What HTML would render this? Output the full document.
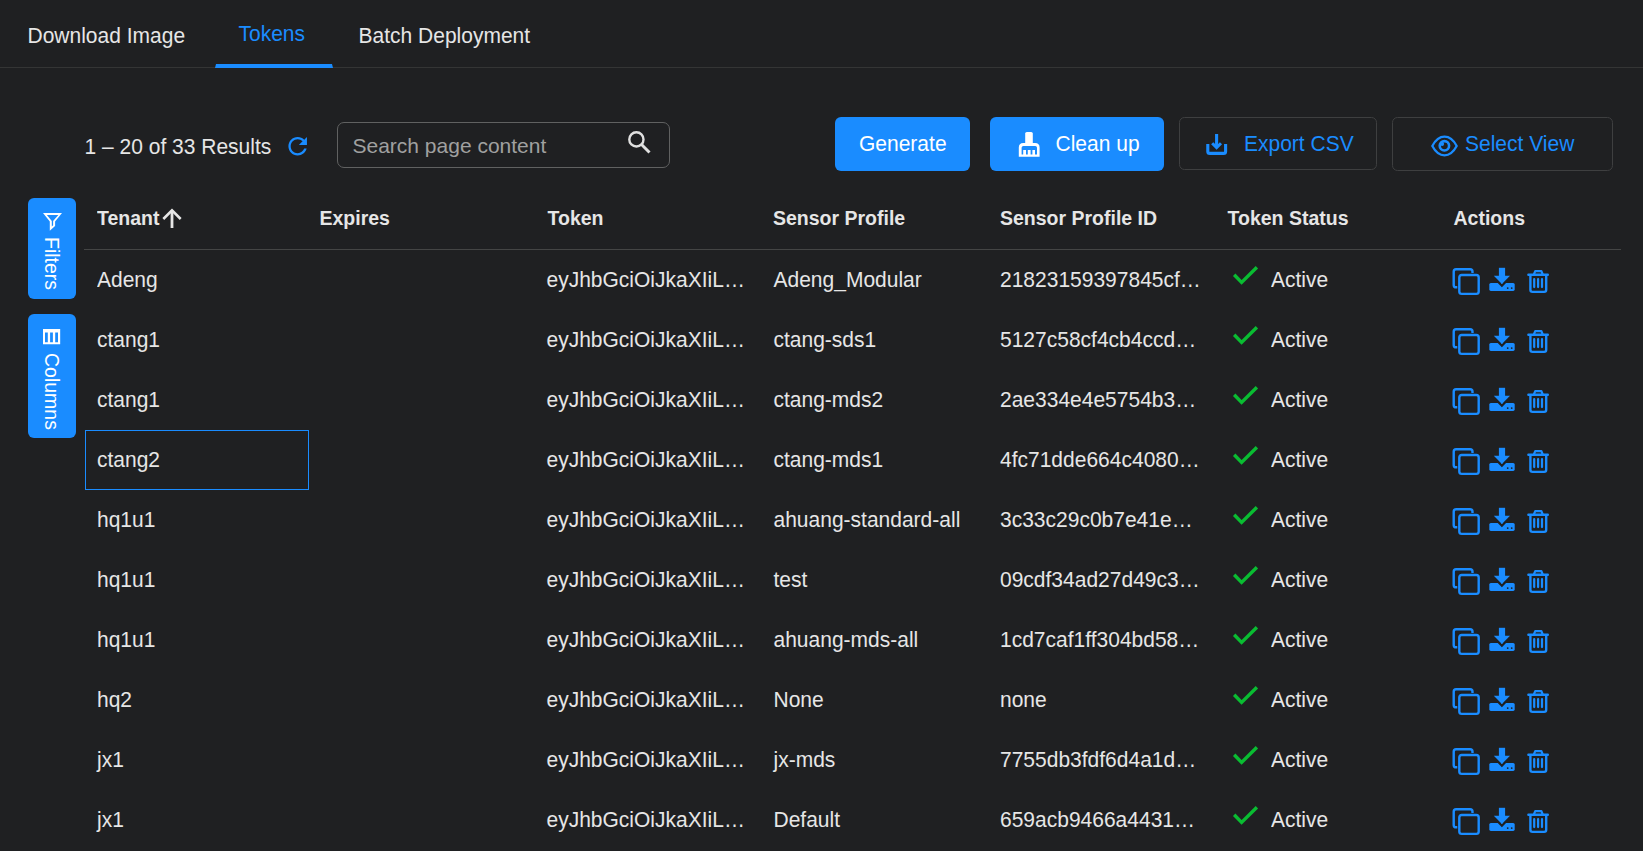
<!DOCTYPE html>
<html><head><meta charset="utf-8">
<style>
html,body{margin:0;padding:0;}
body{width:1643px;height:851px;overflow:hidden;background:#1f2022;position:relative;font-family:"Liberation Sans",sans-serif;font-size:21px;color:#e6e6e6;}
.a{position:absolute;white-space:nowrap;line-height:24px;transform:scaleY(1.05);transform-origin:0 19px;}
.tabline{position:absolute;left:0;top:67px;width:1643px;height:1px;background:#343535;}
.tabul{position:absolute;left:215px;top:64px;width:118px;height:4px;background:#1a8cff;clip-path:polygon(1px 0,117px 0,118px 100%,0 100%);}
.btn{position:absolute;box-sizing:border-box;border-radius:6px;}
.blue{background:#1a8cff;color:#fff;}
.outl{border:1px solid #3e3f40;color:#1a8cff;border-radius:5.5px;}
.hdr{font-weight:bold;font-size:19.5px;transform:scaleY(1.08);transform-origin:0 18.75px;}
.hline{position:absolute;left:84px;top:249px;width:1537px;height:1px;background:#444545;}
.side{position:absolute;left:28px;width:48px;background:#1a8cff;border-radius:6px;color:#fff;}
.vt{position:absolute;writing-mode:vertical-rl;font-size:19.5px;line-height:24px;white-space:nowrap;}
svg{position:absolute;overflow:visible;}
</style></head><body>
<!-- tabs -->
<div class="a" style="left:27.5px;top:24px;">Download Image</div>
<div class="a" style="left:238.5px;top:22px;color:#1a8cff;">Tokens</div>
<div class="a" style="left:358.5px;top:24px;">Batch Deployment</div>
<div class="tabline"></div>
<div class="tabul"></div>

<!-- toolbar -->
<div class="a" style="left:84.5px;top:135px;">1 – 20 of 33 Results</div>
<svg style="left:283px;top:132px" width="30" height="30" viewBox="0 0 30 30"><g transform="translate(0.75 0.35) scale(1.16)"><path fill="#1a8cff" d="M17.65 6.35C16.2 4.9 14.21 4 12 4c-4.42 0-7.99 3.58-7.99 8s3.57 8 7.99 8c3.73 0 6.84-2.55 7.730-6h-2.08c-.82 2.33-3.04 4-5.65 4-3.31 0-6-2.690-6-6s2.69-6 6-6c1.66 0 3.14.69 4.22 1.78L13 11h7V4l-2.350 2.350z"/></g></svg>

<div class="btn" style="left:337px;top:122px;width:333px;height:46px;border:1px solid #606161;border-radius:7px;"></div>
<div class="a" style="left:352.5px;top:134px;color:#a0a0a0;transform:none;">Search page content</div>
<svg style="left:626.5px;top:129.5px" width="24" height="24" viewBox="0 0 24 24"><circle cx="9.4" cy="9.4" r="7.1" fill="none" stroke="#e0e0e0" stroke-width="2.4"/><path d="M13.8 13.8 L22.5 22.5" stroke="#e0e0e0" stroke-width="3"/></svg>

<div class="btn blue" style="left:835px;top:117px;width:135px;height:54px;"></div>
<div class="a" style="left:859px;top:132px;color:#fff;">Generate</div>

<div class="btn blue" style="left:990px;top:117px;width:174px;height:54px;"></div>
<svg style="left:1012px;top:128px" width="34" height="34" viewBox="0 0 34 34"><rect x="13.2" y="4" width="7.6" height="12" rx="1.6" fill="#fff"/><path fill-rule="evenodd" fill="#fff" d="M6.8 28.8 V19.5 Q6.8 15 11.3 15 H23.1 Q27.6 15 27.6 19.5 V28.8 Z M9.6 26.4 V19.8 Q9.6 18 11.4 18 H23.2 Q25 18 25 19.8 V26.4 Z"/><rect x="11.2" y="22" width="2.8" height="5" fill="#fff"/><rect x="15.8" y="22" width="2.8" height="5" fill="#fff"/><rect x="20.4" y="22" width="2.6" height="5" fill="#fff"/></svg>
<div class="a" style="left:1055.5px;top:132px;color:#fff;">Clean up</div>

<div class="btn outl" style="left:1179px;top:117px;width:198px;height:53px;"></div>
<svg style="left:1200px;top:128px" width="34" height="34" viewBox="0 0 34 34"><path d="M16.6 6 V19.5" stroke="#1a8cff" stroke-width="3.1" fill="none"/><path d="M12.2 15.2 L16.6 19.6 L21 15.2" stroke="#1a8cff" stroke-width="3" fill="none"/><path d="M7.8 16 V23.4 Q7.8 25.4 9.8 25.4 H23.6 Q25.6 25.4 25.6 23.4 V16" stroke="#1a8cff" stroke-width="3.1" fill="none"/></svg>
<div class="a" style="left:1244px;top:132px;color:#1a8cff;">Export CSV</div>

<div class="btn outl" style="left:1392px;top:117px;width:221px;height:54px;"></div>
<svg style="left:1426px;top:128px" width="36" height="34" viewBox="0 0 36 34"><path d="M6.3 18 C9.5 12 13.5 8.7 18.5 8.7 C23.5 8.7 27.5 12 30.7 18 C27.5 24 23.5 27.3 18.5 27.3 C13.5 27.3 9.5 24 6.3 18 Z" fill="none" stroke="#1a8cff" stroke-width="2.3" stroke-linejoin="round"/><circle cx="18.4" cy="17.8" r="4.7" fill="none" stroke="#1a8cff" stroke-width="2.6"/><circle cx="16.1" cy="15.9" r="2" fill="#1a8cff"/></svg>
<div class="a" style="left:1465px;top:132px;color:#1a8cff;">Select View</div>

<!-- side buttons -->
<div class="side" style="top:198px;height:101px;"></div>
<svg style="left:43px;top:213px" width="20" height="19" viewBox="0 0 20 19"><path fill-rule="evenodd" fill="#fff" d="M0 0 H19 L12.1 8.5 V13 L6.8 17.7 V8.5 Z M3.9 2 H15.4 L10.1 8 V12.2 L8.8 13.4 V8 Z"/></svg>
<div class="vt" style="left:40px;top:237px;color:#fff;">Filters</div>
<div class="side" style="top:314px;height:124px;"></div>
<svg style="left:43px;top:329px" width="17.2" height="15.2" viewBox="0 0 17.2 15.2"><path fill-rule="evenodd" fill="#fff" d="M0 0 H17.2 V15.2 H0 Z M2 3.4 H4.8 V13.2 H2 Z M7.1 3.4 H9.9 V13.2 H7.1 Z M12.2 3.4 H15 V13.2 H12.2 Z"/></svg>
<div class="vt" style="left:40px;top:353px;color:#fff;">Columns</div>

<!-- header -->
<div class="a hdr" style="left:97px;top:206px;">Tenant</div>
<svg style="left:162px;top:208px" width="20" height="21" viewBox="0 0 20 21"><path d="M10 2.5 V20" fill="none" stroke="#e6e6e6" stroke-width="2.8"/><path d="M1.3 11 L10 2.3 L18.7 11" fill="none" stroke="#e6e6e6" stroke-width="2.6"/></svg>
<div class="a hdr" style="left:319.5px;top:206px;">Expires</div>
<div class="a hdr" style="left:547.5px;top:206px;">Token</div>
<div class="a hdr" style="left:773px;top:206px;">Sensor Profile</div>
<div class="a hdr" style="left:1000px;top:206px;">Sensor Profile ID</div>
<div class="a hdr" style="left:1227.5px;top:206px;">Token Status</div>
<div class="a hdr" style="left:1453.5px;top:206px;">Actions</div>
<div class="hline"></div>

<div class="btn" style="left:85px;top:430px;width:224px;height:60px;border:1px solid #1a8cff;border-radius:0;"></div>

<!--ROWS-->
<div class="a" style="left:97px;top:268px;">Adeng</div>
<div class="a" style="left:546.5px;top:268px;">eyJhbGciOiJkaXIiL…</div>
<div class="a" style="left:773.5px;top:268px;">Adeng_Modular</div>
<div class="a" style="left:1000px;top:268px;">21823159397845cf…</div>
<svg style="left:1228px;top:260px" width="36" height="30" viewBox="0 0 36 30"><path d="M6.2 14.8 L13.6 22.4 L28.9 7.2" fill="none" stroke="#0abc32" stroke-width="3.4"/></svg>
<div class="a" style="left:1271px;top:268px;">Active</div>
<svg style="left:1448px;top:264px" width="36" height="34" viewBox="0 0 36 34"><rect x="5.7" y="5.3" width="18.8" height="18" rx="2.4" fill="none" stroke="#1a8cff" stroke-width="2.4"/><rect x="11.3" y="11" width="19.4" height="18.9" rx="2.4" fill="#1f2022" stroke="#1f2022" stroke-width="4"/><rect x="11.3" y="11" width="19.4" height="18.9" rx="2.4" fill="none" stroke="#1a8cff" stroke-width="2.4"/></svg>
<svg style="left:1485px;top:264px" width="35" height="32" viewBox="0 0 35 32"><rect x="4.3" y="19" width="25.4" height="7.9" rx="1.6" fill="#1a8cff"/><path d="M7.6 12.2 L16.9 21.6 L26.2 12.2" fill="none" stroke="#1f2022" stroke-width="2.2"/><rect x="13.9" y="3.8" width="6.2" height="9" fill="#1a8cff"/><path d="M8.8 11.65 H25 L16.9 19.9 Z" fill="#1a8cff"/><circle cx="22.7" cy="24.1" r="0.9" fill="#1f2022"/><circle cx="26.7" cy="24.1" r="0.9" fill="#1f2022"/></svg>
<svg style="left:1522px;top:264px" width="32" height="34" viewBox="0 0 32 34"><path d="M6.4 10.8 H25.8" stroke="#1a8cff" stroke-width="2.4" stroke-linecap="round"/><path d="M11.9 10.5 L13.2 7.1 H19.4 L20.7 10.5" fill="none" stroke="#1a8cff" stroke-width="2.2" stroke-linejoin="round"/><path d="M8.4 11 V25.8 Q8.4 27.9 10.5 27.9 H22.1 Q24.2 27.9 24.2 25.8 V11" fill="none" stroke="#1a8cff" stroke-width="2.4"/><path d="M12.2 15.1 V23.1 M16.1 15.1 V23.1 M20 15.1 V23.1" stroke="#1a8cff" stroke-width="2.2" stroke-linecap="round"/></svg>
<div class="a" style="left:97px;top:328px;">ctang1</div>
<div class="a" style="left:546.5px;top:328px;">eyJhbGciOiJkaXIiL…</div>
<div class="a" style="left:773.5px;top:328px;">ctang-sds1</div>
<div class="a" style="left:1000px;top:328px;">5127c58cf4cb4ccd…</div>
<svg style="left:1228px;top:320px" width="36" height="30" viewBox="0 0 36 30"><path d="M6.2 14.8 L13.6 22.4 L28.9 7.2" fill="none" stroke="#0abc32" stroke-width="3.4"/></svg>
<div class="a" style="left:1271px;top:328px;">Active</div>
<svg style="left:1448px;top:324px" width="36" height="34" viewBox="0 0 36 34"><rect x="5.7" y="5.3" width="18.8" height="18" rx="2.4" fill="none" stroke="#1a8cff" stroke-width="2.4"/><rect x="11.3" y="11" width="19.4" height="18.9" rx="2.4" fill="#1f2022" stroke="#1f2022" stroke-width="4"/><rect x="11.3" y="11" width="19.4" height="18.9" rx="2.4" fill="none" stroke="#1a8cff" stroke-width="2.4"/></svg>
<svg style="left:1485px;top:324px" width="35" height="32" viewBox="0 0 35 32"><rect x="4.3" y="19" width="25.4" height="7.9" rx="1.6" fill="#1a8cff"/><path d="M7.6 12.2 L16.9 21.6 L26.2 12.2" fill="none" stroke="#1f2022" stroke-width="2.2"/><rect x="13.9" y="3.8" width="6.2" height="9" fill="#1a8cff"/><path d="M8.8 11.65 H25 L16.9 19.9 Z" fill="#1a8cff"/><circle cx="22.7" cy="24.1" r="0.9" fill="#1f2022"/><circle cx="26.7" cy="24.1" r="0.9" fill="#1f2022"/></svg>
<svg style="left:1522px;top:324px" width="32" height="34" viewBox="0 0 32 34"><path d="M6.4 10.8 H25.8" stroke="#1a8cff" stroke-width="2.4" stroke-linecap="round"/><path d="M11.9 10.5 L13.2 7.1 H19.4 L20.7 10.5" fill="none" stroke="#1a8cff" stroke-width="2.2" stroke-linejoin="round"/><path d="M8.4 11 V25.8 Q8.4 27.9 10.5 27.9 H22.1 Q24.2 27.9 24.2 25.8 V11" fill="none" stroke="#1a8cff" stroke-width="2.4"/><path d="M12.2 15.1 V23.1 M16.1 15.1 V23.1 M20 15.1 V23.1" stroke="#1a8cff" stroke-width="2.2" stroke-linecap="round"/></svg>
<div class="a" style="left:97px;top:388px;">ctang1</div>
<div class="a" style="left:546.5px;top:388px;">eyJhbGciOiJkaXIiL…</div>
<div class="a" style="left:773.5px;top:388px;">ctang-mds2</div>
<div class="a" style="left:1000px;top:388px;">2ae334e4e5754b3…</div>
<svg style="left:1228px;top:380px" width="36" height="30" viewBox="0 0 36 30"><path d="M6.2 14.8 L13.6 22.4 L28.9 7.2" fill="none" stroke="#0abc32" stroke-width="3.4"/></svg>
<div class="a" style="left:1271px;top:388px;">Active</div>
<svg style="left:1448px;top:384px" width="36" height="34" viewBox="0 0 36 34"><rect x="5.7" y="5.3" width="18.8" height="18" rx="2.4" fill="none" stroke="#1a8cff" stroke-width="2.4"/><rect x="11.3" y="11" width="19.4" height="18.9" rx="2.4" fill="#1f2022" stroke="#1f2022" stroke-width="4"/><rect x="11.3" y="11" width="19.4" height="18.9" rx="2.4" fill="none" stroke="#1a8cff" stroke-width="2.4"/></svg>
<svg style="left:1485px;top:384px" width="35" height="32" viewBox="0 0 35 32"><rect x="4.3" y="19" width="25.4" height="7.9" rx="1.6" fill="#1a8cff"/><path d="M7.6 12.2 L16.9 21.6 L26.2 12.2" fill="none" stroke="#1f2022" stroke-width="2.2"/><rect x="13.9" y="3.8" width="6.2" height="9" fill="#1a8cff"/><path d="M8.8 11.65 H25 L16.9 19.9 Z" fill="#1a8cff"/><circle cx="22.7" cy="24.1" r="0.9" fill="#1f2022"/><circle cx="26.7" cy="24.1" r="0.9" fill="#1f2022"/></svg>
<svg style="left:1522px;top:384px" width="32" height="34" viewBox="0 0 32 34"><path d="M6.4 10.8 H25.8" stroke="#1a8cff" stroke-width="2.4" stroke-linecap="round"/><path d="M11.9 10.5 L13.2 7.1 H19.4 L20.7 10.5" fill="none" stroke="#1a8cff" stroke-width="2.2" stroke-linejoin="round"/><path d="M8.4 11 V25.8 Q8.4 27.9 10.5 27.9 H22.1 Q24.2 27.9 24.2 25.8 V11" fill="none" stroke="#1a8cff" stroke-width="2.4"/><path d="M12.2 15.1 V23.1 M16.1 15.1 V23.1 M20 15.1 V23.1" stroke="#1a8cff" stroke-width="2.2" stroke-linecap="round"/></svg>
<div class="a" style="left:97px;top:448px;">ctang2</div>
<div class="a" style="left:546.5px;top:448px;">eyJhbGciOiJkaXIiL…</div>
<div class="a" style="left:773.5px;top:448px;">ctang-mds1</div>
<div class="a" style="left:1000px;top:448px;">4fc71dde664c4080…</div>
<svg style="left:1228px;top:440px" width="36" height="30" viewBox="0 0 36 30"><path d="M6.2 14.8 L13.6 22.4 L28.9 7.2" fill="none" stroke="#0abc32" stroke-width="3.4"/></svg>
<div class="a" style="left:1271px;top:448px;">Active</div>
<svg style="left:1448px;top:444px" width="36" height="34" viewBox="0 0 36 34"><rect x="5.7" y="5.3" width="18.8" height="18" rx="2.4" fill="none" stroke="#1a8cff" stroke-width="2.4"/><rect x="11.3" y="11" width="19.4" height="18.9" rx="2.4" fill="#1f2022" stroke="#1f2022" stroke-width="4"/><rect x="11.3" y="11" width="19.4" height="18.9" rx="2.4" fill="none" stroke="#1a8cff" stroke-width="2.4"/></svg>
<svg style="left:1485px;top:444px" width="35" height="32" viewBox="0 0 35 32"><rect x="4.3" y="19" width="25.4" height="7.9" rx="1.6" fill="#1a8cff"/><path d="M7.6 12.2 L16.9 21.6 L26.2 12.2" fill="none" stroke="#1f2022" stroke-width="2.2"/><rect x="13.9" y="3.8" width="6.2" height="9" fill="#1a8cff"/><path d="M8.8 11.65 H25 L16.9 19.9 Z" fill="#1a8cff"/><circle cx="22.7" cy="24.1" r="0.9" fill="#1f2022"/><circle cx="26.7" cy="24.1" r="0.9" fill="#1f2022"/></svg>
<svg style="left:1522px;top:444px" width="32" height="34" viewBox="0 0 32 34"><path d="M6.4 10.8 H25.8" stroke="#1a8cff" stroke-width="2.4" stroke-linecap="round"/><path d="M11.9 10.5 L13.2 7.1 H19.4 L20.7 10.5" fill="none" stroke="#1a8cff" stroke-width="2.2" stroke-linejoin="round"/><path d="M8.4 11 V25.8 Q8.4 27.9 10.5 27.9 H22.1 Q24.2 27.9 24.2 25.8 V11" fill="none" stroke="#1a8cff" stroke-width="2.4"/><path d="M12.2 15.1 V23.1 M16.1 15.1 V23.1 M20 15.1 V23.1" stroke="#1a8cff" stroke-width="2.2" stroke-linecap="round"/></svg>
<div class="a" style="left:97px;top:508px;">hq1u1</div>
<div class="a" style="left:546.5px;top:508px;">eyJhbGciOiJkaXIiL…</div>
<div class="a" style="left:773.5px;top:508px;">ahuang-standard-all</div>
<div class="a" style="left:1000px;top:508px;">3c33c29c0b7e41e…</div>
<svg style="left:1228px;top:500px" width="36" height="30" viewBox="0 0 36 30"><path d="M6.2 14.8 L13.6 22.4 L28.9 7.2" fill="none" stroke="#0abc32" stroke-width="3.4"/></svg>
<div class="a" style="left:1271px;top:508px;">Active</div>
<svg style="left:1448px;top:504px" width="36" height="34" viewBox="0 0 36 34"><rect x="5.7" y="5.3" width="18.8" height="18" rx="2.4" fill="none" stroke="#1a8cff" stroke-width="2.4"/><rect x="11.3" y="11" width="19.4" height="18.9" rx="2.4" fill="#1f2022" stroke="#1f2022" stroke-width="4"/><rect x="11.3" y="11" width="19.4" height="18.9" rx="2.4" fill="none" stroke="#1a8cff" stroke-width="2.4"/></svg>
<svg style="left:1485px;top:504px" width="35" height="32" viewBox="0 0 35 32"><rect x="4.3" y="19" width="25.4" height="7.9" rx="1.6" fill="#1a8cff"/><path d="M7.6 12.2 L16.9 21.6 L26.2 12.2" fill="none" stroke="#1f2022" stroke-width="2.2"/><rect x="13.9" y="3.8" width="6.2" height="9" fill="#1a8cff"/><path d="M8.8 11.65 H25 L16.9 19.9 Z" fill="#1a8cff"/><circle cx="22.7" cy="24.1" r="0.9" fill="#1f2022"/><circle cx="26.7" cy="24.1" r="0.9" fill="#1f2022"/></svg>
<svg style="left:1522px;top:504px" width="32" height="34" viewBox="0 0 32 34"><path d="M6.4 10.8 H25.8" stroke="#1a8cff" stroke-width="2.4" stroke-linecap="round"/><path d="M11.9 10.5 L13.2 7.1 H19.4 L20.7 10.5" fill="none" stroke="#1a8cff" stroke-width="2.2" stroke-linejoin="round"/><path d="M8.4 11 V25.8 Q8.4 27.9 10.5 27.9 H22.1 Q24.2 27.9 24.2 25.8 V11" fill="none" stroke="#1a8cff" stroke-width="2.4"/><path d="M12.2 15.1 V23.1 M16.1 15.1 V23.1 M20 15.1 V23.1" stroke="#1a8cff" stroke-width="2.2" stroke-linecap="round"/></svg>
<div class="a" style="left:97px;top:568px;">hq1u1</div>
<div class="a" style="left:546.5px;top:568px;">eyJhbGciOiJkaXIiL…</div>
<div class="a" style="left:773.5px;top:568px;">test</div>
<div class="a" style="left:1000px;top:568px;">09cdf34ad27d49c3…</div>
<svg style="left:1228px;top:560px" width="36" height="30" viewBox="0 0 36 30"><path d="M6.2 14.8 L13.6 22.4 L28.9 7.2" fill="none" stroke="#0abc32" stroke-width="3.4"/></svg>
<div class="a" style="left:1271px;top:568px;">Active</div>
<svg style="left:1448px;top:564px" width="36" height="34" viewBox="0 0 36 34"><rect x="5.7" y="5.3" width="18.8" height="18" rx="2.4" fill="none" stroke="#1a8cff" stroke-width="2.4"/><rect x="11.3" y="11" width="19.4" height="18.9" rx="2.4" fill="#1f2022" stroke="#1f2022" stroke-width="4"/><rect x="11.3" y="11" width="19.4" height="18.9" rx="2.4" fill="none" stroke="#1a8cff" stroke-width="2.4"/></svg>
<svg style="left:1485px;top:564px" width="35" height="32" viewBox="0 0 35 32"><rect x="4.3" y="19" width="25.4" height="7.9" rx="1.6" fill="#1a8cff"/><path d="M7.6 12.2 L16.9 21.6 L26.2 12.2" fill="none" stroke="#1f2022" stroke-width="2.2"/><rect x="13.9" y="3.8" width="6.2" height="9" fill="#1a8cff"/><path d="M8.8 11.65 H25 L16.9 19.9 Z" fill="#1a8cff"/><circle cx="22.7" cy="24.1" r="0.9" fill="#1f2022"/><circle cx="26.7" cy="24.1" r="0.9" fill="#1f2022"/></svg>
<svg style="left:1522px;top:564px" width="32" height="34" viewBox="0 0 32 34"><path d="M6.4 10.8 H25.8" stroke="#1a8cff" stroke-width="2.4" stroke-linecap="round"/><path d="M11.9 10.5 L13.2 7.1 H19.4 L20.7 10.5" fill="none" stroke="#1a8cff" stroke-width="2.2" stroke-linejoin="round"/><path d="M8.4 11 V25.8 Q8.4 27.9 10.5 27.9 H22.1 Q24.2 27.9 24.2 25.8 V11" fill="none" stroke="#1a8cff" stroke-width="2.4"/><path d="M12.2 15.1 V23.1 M16.1 15.1 V23.1 M20 15.1 V23.1" stroke="#1a8cff" stroke-width="2.2" stroke-linecap="round"/></svg>
<div class="a" style="left:97px;top:628px;">hq1u1</div>
<div class="a" style="left:546.5px;top:628px;">eyJhbGciOiJkaXIiL…</div>
<div class="a" style="left:773.5px;top:628px;">ahuang-mds-all</div>
<div class="a" style="left:1000px;top:628px;">1cd7caf1ff304bd58…</div>
<svg style="left:1228px;top:620px" width="36" height="30" viewBox="0 0 36 30"><path d="M6.2 14.8 L13.6 22.4 L28.9 7.2" fill="none" stroke="#0abc32" stroke-width="3.4"/></svg>
<div class="a" style="left:1271px;top:628px;">Active</div>
<svg style="left:1448px;top:624px" width="36" height="34" viewBox="0 0 36 34"><rect x="5.7" y="5.3" width="18.8" height="18" rx="2.4" fill="none" stroke="#1a8cff" stroke-width="2.4"/><rect x="11.3" y="11" width="19.4" height="18.9" rx="2.4" fill="#1f2022" stroke="#1f2022" stroke-width="4"/><rect x="11.3" y="11" width="19.4" height="18.9" rx="2.4" fill="none" stroke="#1a8cff" stroke-width="2.4"/></svg>
<svg style="left:1485px;top:624px" width="35" height="32" viewBox="0 0 35 32"><rect x="4.3" y="19" width="25.4" height="7.9" rx="1.6" fill="#1a8cff"/><path d="M7.6 12.2 L16.9 21.6 L26.2 12.2" fill="none" stroke="#1f2022" stroke-width="2.2"/><rect x="13.9" y="3.8" width="6.2" height="9" fill="#1a8cff"/><path d="M8.8 11.65 H25 L16.9 19.9 Z" fill="#1a8cff"/><circle cx="22.7" cy="24.1" r="0.9" fill="#1f2022"/><circle cx="26.7" cy="24.1" r="0.9" fill="#1f2022"/></svg>
<svg style="left:1522px;top:624px" width="32" height="34" viewBox="0 0 32 34"><path d="M6.4 10.8 H25.8" stroke="#1a8cff" stroke-width="2.4" stroke-linecap="round"/><path d="M11.9 10.5 L13.2 7.1 H19.4 L20.7 10.5" fill="none" stroke="#1a8cff" stroke-width="2.2" stroke-linejoin="round"/><path d="M8.4 11 V25.8 Q8.4 27.9 10.5 27.9 H22.1 Q24.2 27.9 24.2 25.8 V11" fill="none" stroke="#1a8cff" stroke-width="2.4"/><path d="M12.2 15.1 V23.1 M16.1 15.1 V23.1 M20 15.1 V23.1" stroke="#1a8cff" stroke-width="2.2" stroke-linecap="round"/></svg>
<div class="a" style="left:97px;top:688px;">hq2</div>
<div class="a" style="left:546.5px;top:688px;">eyJhbGciOiJkaXIiL…</div>
<div class="a" style="left:773.5px;top:688px;">None</div>
<div class="a" style="left:1000px;top:688px;">none</div>
<svg style="left:1228px;top:680px" width="36" height="30" viewBox="0 0 36 30"><path d="M6.2 14.8 L13.6 22.4 L28.9 7.2" fill="none" stroke="#0abc32" stroke-width="3.4"/></svg>
<div class="a" style="left:1271px;top:688px;">Active</div>
<svg style="left:1448px;top:684px" width="36" height="34" viewBox="0 0 36 34"><rect x="5.7" y="5.3" width="18.8" height="18" rx="2.4" fill="none" stroke="#1a8cff" stroke-width="2.4"/><rect x="11.3" y="11" width="19.4" height="18.9" rx="2.4" fill="#1f2022" stroke="#1f2022" stroke-width="4"/><rect x="11.3" y="11" width="19.4" height="18.9" rx="2.4" fill="none" stroke="#1a8cff" stroke-width="2.4"/></svg>
<svg style="left:1485px;top:684px" width="35" height="32" viewBox="0 0 35 32"><rect x="4.3" y="19" width="25.4" height="7.9" rx="1.6" fill="#1a8cff"/><path d="M7.6 12.2 L16.9 21.6 L26.2 12.2" fill="none" stroke="#1f2022" stroke-width="2.2"/><rect x="13.9" y="3.8" width="6.2" height="9" fill="#1a8cff"/><path d="M8.8 11.65 H25 L16.9 19.9 Z" fill="#1a8cff"/><circle cx="22.7" cy="24.1" r="0.9" fill="#1f2022"/><circle cx="26.7" cy="24.1" r="0.9" fill="#1f2022"/></svg>
<svg style="left:1522px;top:684px" width="32" height="34" viewBox="0 0 32 34"><path d="M6.4 10.8 H25.8" stroke="#1a8cff" stroke-width="2.4" stroke-linecap="round"/><path d="M11.9 10.5 L13.2 7.1 H19.4 L20.7 10.5" fill="none" stroke="#1a8cff" stroke-width="2.2" stroke-linejoin="round"/><path d="M8.4 11 V25.8 Q8.4 27.9 10.5 27.9 H22.1 Q24.2 27.9 24.2 25.8 V11" fill="none" stroke="#1a8cff" stroke-width="2.4"/><path d="M12.2 15.1 V23.1 M16.1 15.1 V23.1 M20 15.1 V23.1" stroke="#1a8cff" stroke-width="2.2" stroke-linecap="round"/></svg>
<div class="a" style="left:97px;top:748px;">jx1</div>
<div class="a" style="left:546.5px;top:748px;">eyJhbGciOiJkaXIiL…</div>
<div class="a" style="left:773.5px;top:748px;">jx-mds</div>
<div class="a" style="left:1000px;top:748px;">7755db3fdf6d4a1d…</div>
<svg style="left:1228px;top:740px" width="36" height="30" viewBox="0 0 36 30"><path d="M6.2 14.8 L13.6 22.4 L28.9 7.2" fill="none" stroke="#0abc32" stroke-width="3.4"/></svg>
<div class="a" style="left:1271px;top:748px;">Active</div>
<svg style="left:1448px;top:744px" width="36" height="34" viewBox="0 0 36 34"><rect x="5.7" y="5.3" width="18.8" height="18" rx="2.4" fill="none" stroke="#1a8cff" stroke-width="2.4"/><rect x="11.3" y="11" width="19.4" height="18.9" rx="2.4" fill="#1f2022" stroke="#1f2022" stroke-width="4"/><rect x="11.3" y="11" width="19.4" height="18.9" rx="2.4" fill="none" stroke="#1a8cff" stroke-width="2.4"/></svg>
<svg style="left:1485px;top:744px" width="35" height="32" viewBox="0 0 35 32"><rect x="4.3" y="19" width="25.4" height="7.9" rx="1.6" fill="#1a8cff"/><path d="M7.6 12.2 L16.9 21.6 L26.2 12.2" fill="none" stroke="#1f2022" stroke-width="2.2"/><rect x="13.9" y="3.8" width="6.2" height="9" fill="#1a8cff"/><path d="M8.8 11.65 H25 L16.9 19.9 Z" fill="#1a8cff"/><circle cx="22.7" cy="24.1" r="0.9" fill="#1f2022"/><circle cx="26.7" cy="24.1" r="0.9" fill="#1f2022"/></svg>
<svg style="left:1522px;top:744px" width="32" height="34" viewBox="0 0 32 34"><path d="M6.4 10.8 H25.8" stroke="#1a8cff" stroke-width="2.4" stroke-linecap="round"/><path d="M11.9 10.5 L13.2 7.1 H19.4 L20.7 10.5" fill="none" stroke="#1a8cff" stroke-width="2.2" stroke-linejoin="round"/><path d="M8.4 11 V25.8 Q8.4 27.9 10.5 27.9 H22.1 Q24.2 27.9 24.2 25.8 V11" fill="none" stroke="#1a8cff" stroke-width="2.4"/><path d="M12.2 15.1 V23.1 M16.1 15.1 V23.1 M20 15.1 V23.1" stroke="#1a8cff" stroke-width="2.2" stroke-linecap="round"/></svg>
<div class="a" style="left:97px;top:808px;">jx1</div>
<div class="a" style="left:546.5px;top:808px;">eyJhbGciOiJkaXIiL…</div>
<div class="a" style="left:773.5px;top:808px;">Default</div>
<div class="a" style="left:1000px;top:808px;">659acb9466a4431…</div>
<svg style="left:1228px;top:800px" width="36" height="30" viewBox="0 0 36 30"><path d="M6.2 14.8 L13.6 22.4 L28.9 7.2" fill="none" stroke="#0abc32" stroke-width="3.4"/></svg>
<div class="a" style="left:1271px;top:808px;">Active</div>
<svg style="left:1448px;top:804px" width="36" height="34" viewBox="0 0 36 34"><rect x="5.7" y="5.3" width="18.8" height="18" rx="2.4" fill="none" stroke="#1a8cff" stroke-width="2.4"/><rect x="11.3" y="11" width="19.4" height="18.9" rx="2.4" fill="#1f2022" stroke="#1f2022" stroke-width="4"/><rect x="11.3" y="11" width="19.4" height="18.9" rx="2.4" fill="none" stroke="#1a8cff" stroke-width="2.4"/></svg>
<svg style="left:1485px;top:804px" width="35" height="32" viewBox="0 0 35 32"><rect x="4.3" y="19" width="25.4" height="7.9" rx="1.6" fill="#1a8cff"/><path d="M7.6 12.2 L16.9 21.6 L26.2 12.2" fill="none" stroke="#1f2022" stroke-width="2.2"/><rect x="13.9" y="3.8" width="6.2" height="9" fill="#1a8cff"/><path d="M8.8 11.65 H25 L16.9 19.9 Z" fill="#1a8cff"/><circle cx="22.7" cy="24.1" r="0.9" fill="#1f2022"/><circle cx="26.7" cy="24.1" r="0.9" fill="#1f2022"/></svg>
<svg style="left:1522px;top:804px" width="32" height="34" viewBox="0 0 32 34"><path d="M6.4 10.8 H25.8" stroke="#1a8cff" stroke-width="2.4" stroke-linecap="round"/><path d="M11.9 10.5 L13.2 7.1 H19.4 L20.7 10.5" fill="none" stroke="#1a8cff" stroke-width="2.2" stroke-linejoin="round"/><path d="M8.4 11 V25.8 Q8.4 27.9 10.5 27.9 H22.1 Q24.2 27.9 24.2 25.8 V11" fill="none" stroke="#1a8cff" stroke-width="2.4"/><path d="M12.2 15.1 V23.1 M16.1 15.1 V23.1 M20 15.1 V23.1" stroke="#1a8cff" stroke-width="2.2" stroke-linecap="round"/></svg>
<!--/ROWS-->
</body></html>
